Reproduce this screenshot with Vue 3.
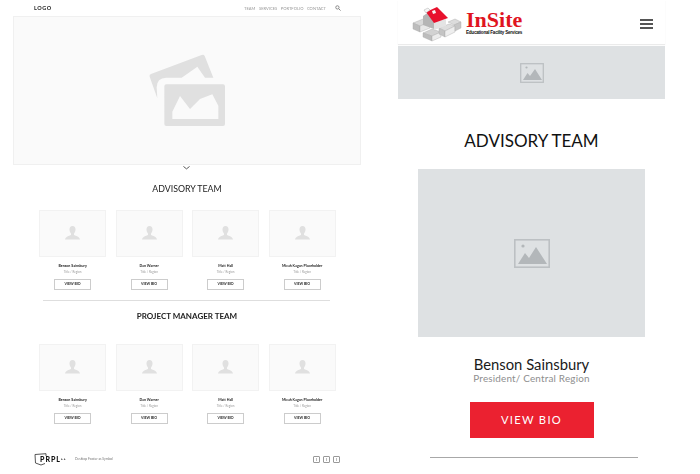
<script setup>
const advisory = ['Benson Sainsbury', 'Dan Warner', 'Matt Hall', 'Micah Kagan Placeholder']
const managers = ['Benson Sainsbury', 'Dan Warner', 'Matt Hall', 'Micah Kagan Placeholder']
const teams = [
  { title: 'ADVISORY TEAM', cls: 'advisory', people: advisory },
  { title: 'PROJECT MANAGER TEAM', cls: 'managers', people: managers },
]
const navLinks = ['TEAM', 'SERVICES', 'PORTFOLIO', 'CONTACT']
</script>

<template>
  <div class="page">
    <section class="desktop">
      <header class="desk-nav">
        <span class="logo-word">LOGO</span>
        <nav class="desk-links">
          <a v-for="l in navLinks" :key="l">{{ l }}</a>
        </nav>
        <svg class="search" viewBox="0 0 8 8" width="6" height="6">
          <circle cx="3.2" cy="3.2" r="2.2" fill="none" stroke="#777" stroke-width="1.1" />
          <path d="M5 5l2.4 2.4" stroke="#777" stroke-width="1.2" />
        </svg>
      </header>

      <div class="hero">
        <svg viewBox="0 0 228 216" width="76" height="72">
          <path fill="#e0e0e0" d="M2 68Q0 62 6 60L158 3Q164 0 167 6L193 71H168L145 38 98 71H52Q23 72 23 100L25 133Z" />
          <path fill="#e0e0e0" fill-rule="evenodd" d="M52 91H222Q228 91 228 97V210Q228 216 222 216H52Q46 216 46 210V97Q46 91 52 91ZM70 195H208V155L190 121 153 135 123 165 93 126 70 173Z" />
        </svg>
      </div>
      <svg class="chevron" viewBox="0 0 8 4" width="7" height="3.500">
        <path d="M.5 .5L4 3.300 7.500 .5" fill="none" stroke="#444" stroke-width="1" />
      </svg>

      <template v-for="team in teams" :key="team.title">
        <h2 :class="['team-title', team.cls]">{{ team.title }}</h2>
        <div :class="['cards', team.cls]">
          <article v-for="p in team.people" :key="p" class="card">
            <div class="thumb">
              <svg viewBox="0 0 15 14" width="15" height="14">
                <path fill="#e0e0e0" d="M7.500 0C5.500 0 4.500 1.500 4.500 3.500 4.500 5.500 5.500 7 6 7.500V9C4 10 .5 10.500 0 13.500H15C14.500 10.500 11 10 9 9V7.500C9.500 7 10.500 5.500 10.500 3.500 10.500 1.500 9.500 0 7.500 0Z" />
              </svg>
            </div>
            <p class="card-name">{{ p }}</p>
            <p class="card-role">Title / Region</p>
            <button class="card-btn">VIEW BIO</button>
          </article>
        </div>
        <hr v-if="team.cls === 'advisory'" class="desk-rule" />
      </template>

      <footer class="desk-foot">
        <div class="prpl">
          <svg viewBox="0 0 14 13" width="14" height="13">
            <path d="M1 1.500L12 .7V3M1 1.500L1.500 10 7 12 11 10.500" fill="none" stroke="#444" stroke-width=".9" />
          </svg>
          <span class="prpl-word">PRPL<sup>++</sup></span>
        </div>
        <span class="foot-note">Desktop Footer as Symbol</span>
        <div class="foot-icons">
          <i v-for="n in 3" :key="n" class="foot-icon"></i>
        </div>
      </footer>
    </section>

    <section class="mobile">
      <header class="mob-nav">
        <div class="insite">
          <svg class="insite-mark" viewBox="0 0 50 36" width="50" height="36">
            <path fill="#d9d9d9" stroke="#aaa" stroke-width=".4" d="M1 17L11 13 18 16 8 20Z" />
            <path fill="#bdbdbd" stroke="#aaa" stroke-width=".4" d="M1 17V23L8 26V20Z" />
            <path fill="#e8e8e8" stroke="#aaa" stroke-width=".4" d="M8 20L18 16V22L8 26Z" />
            <path fill="#d2d2d2" stroke="#aaa" stroke-width=".4" d="M11 27L20 23 29 26 20 30Z" />
            <path fill="#bdbdbd" stroke="#aaa" stroke-width=".4" d="M11 27V31L20 35V30Z" />
            <path fill="#ececec" stroke="#aaa" stroke-width=".4" d="M20 30L29 26V31L20 35Z" />
            <path fill="#dedede" stroke="#aaa" stroke-width=".4" d="M27 22L37 18 43 20 33 25Z" />
            <path fill="#c4c4c4" stroke="#aaa" stroke-width=".4" d="M27 22V28L33 31V25Z" />
            <path fill="#eee" stroke="#aaa" stroke-width=".4" d="M33 25L43 20V26L33 31Z" />
            <path fill="#dcdcdc" stroke="#aaa" stroke-width=".4" d="M36 16L43 13 49 16 42 19Z" />
            <path fill="#c6c6c6" stroke="#aaa" stroke-width=".4" d="M42 19L49 16V22L43 25V20Z" />
            <path fill="#b5b5b5" d="M11 10L17 6 22 15V23L11 19Z" />
            <path fill="#e4e4e4" d="M22 16L34 13V20L22 24Z" />
            <path fill="#e8112d" d="M14 6L25 1 36 12 22 17Z" />
            <path fill="#f6f6f6" stroke="#999" stroke-width=".4" d="M12 4L16 2 18 4 14 7Z" />
            <path fill="#f6f6f6" d="M20 5L23 4 24 7 21 8Z" />
          </svg>
          <div class="insite-text">
            <span class="insite-name">InSite</span>
            <span class="insite-tag">Educational Facility Services</span>
          </div>
        </div>
        <div class="burger"><span></span><span></span><span></span></div>
      </header>

      <div class="mob-banner">
        <svg viewBox="0 0 24 20" width="24" height="20">
          <rect x=".7" y=".7" width="22.600" height="18.600" fill="none" stroke="#bcc0c3" stroke-width="1.300" />
          <circle cx="6.500" cy="4.500" r="1.100" fill="#b3b7ba" />
          <path fill="#b3b7ba" d="M3 17L7.500 10 10 13 15 6 22 17Z" />
        </svg>
      </div>

      <h1 class="mob-title">ADVISORY TEAM</h1>

      <div class="mob-photo">
        <svg viewBox="0 0 36 29" width="36" height="29">
          <rect x=".8" y=".8" width="34.400" height="27.400" fill="none" stroke="#bcc0c3" stroke-width="1.600" />
          <circle cx="9" cy="7" r="1.600" fill="#b3b7ba" />
          <path fill="#b3b7ba" d="M4 25L11 14 15 19 22 8 33 25Z" />
        </svg>
      </div>

      <p class="mob-name">Benson Sainsbury</p>
      <p class="mob-role">President/ Central Region</p>
      <button class="mob-btn">VIEW BIO</button>
      <hr class="mob-rule" />
    </section>
  </div>
</template>

<style scoped>
.page {
  display: flex;
  width: 700px;
  height: 474px;
  overflow: hidden;
  background: #fff;
  font-family: Lato, "Noto Sans", sans-serif;
}

/* left: desktop wireframe */
.desktop {
  width: 348px;
  margin-left: 13px;
  flex: none;
  display: flex;
  flex-direction: column;
  filter: blur(0.25px);
}
.desk-nav {
  height: 16px;
  display: flex;
  align-items: center;
  padding: 0 20px 0 21px;
}
.logo-word {
  font-size: 5.500px;
  letter-spacing: 0.5px;
  color: #222;
  font-weight: 700;
}
.desk-links {
  margin-left: auto;
  display: flex;
  gap: 3.500px;
  font-size: 4.100px;
  color: #999;
}
.search {
  margin-left: 9px;
}
.hero {
  height: 149px;
  box-sizing: border-box;
  border: 1px solid #f0f0f0;
  background: #fafafa;
  display: flex;
  align-items: center;
  justify-content: center;
  padding-bottom: 1px;
}
.chevron {
  display: block;
  margin: 0 auto;
  position: relative;
  left: -0.5px;
  top: 1px;
}
.team-title {
  margin: 13px 0 0;
  height: 14px;
  line-height: 14px;
  font-size: 8.800px;
  font-weight: 400;
  color: #222;
  text-align: center;
}
.team-title.managers {
  margin-top: 8.500px;
  font-weight: 700;
  font-size: 8px;
}
.cards {
  display: grid;
  grid-template-columns: repeat(4, 67.250px);
  column-gap: 9.250px;
  padding-left: 26px;
  margin-top: 14px;
}
.cards.managers {
  margin-top: 20.500px;
}
.card {
  display: flex;
  flex-direction: column;
  align-items: center;
}
.thumb {
  width: 100%;
  height: 47px;
  box-sizing: border-box;
  border: 1px solid #f2f2f2;
  background: #fafafa;
  display: flex;
  align-items: center;
  justify-content: center;
}
.card-name {
  margin: 6.500px 0 0;
  font-size: 3.600px;
  line-height: 5px;
  font-weight: 700;
  color: #222;
}
.card-role {
  margin: 1.500px 0 0;
  font-size: 3px;
  line-height: 4px;
  color: #999;
}
.card-btn {
  margin-top: 5px;
  width: 37px;
  height: 11px;
  padding: 0;
  box-sizing: border-box;
  background: #fff;
  border: 1px solid #ccc;
  font-family: inherit;
  font-size: 3.500px;
  font-weight: 700;
  color: #222;
}
.desk-rule {
  width: 287px;
  margin: 10px 0 0 30px;
  border: 0;
  border-top: 1px solid #dedede;
}
.desk-foot {
  display: flex;
  align-items: center;
  margin-top: 27.500px;
  padding: 0 21px 0 21px;
  height: 16px;
}
.prpl {
  display: flex;
  align-items: center;
  width: 41px;
}
.prpl-word {
  margin-left: -8px;
  font-size: 7px;
  font-weight: 900;
  letter-spacing: 1px;
  color: #111;
}
.prpl-word sup {
  font-size: 3px;
  vertical-align: 2px;
  line-height: 0;
}
.foot-note {
  font-size: 3.300px;
  color: #777;
}
.foot-icons {
  margin-left: auto;
  display: flex;
  gap: 3px;
}
.foot-icon {
  position: relative;
  display: block;
  width: 7px;
  height: 7px;
  box-sizing: border-box;
  border: 1px solid #999;
  border-radius: 1px;
}
.foot-icon::after {
  content: "";
  position: absolute;
  left: 1.500px;
  top: 1px;
  width: 1.500px;
  height: 3px;
  background: #bbb;
}

/* right: mobile comp */
.mobile {
  width: 267px;
  margin-left: 37px;
  flex: none;
  display: flex;
  flex-direction: column;
  align-items: center;
}
.mob-nav {
  width: 100%;
  height: 44px;
  box-sizing: border-box;
  display: flex;
  align-items: center;
  justify-content: space-between;
  padding: 0 12px 0 14px;
  box-shadow: 0 1px 1px rgba(0, 0, 0, 0.08);
}
.insite {
  display: flex;
  align-items: center;
  gap: 4px;
}
.insite-mark {
  margin-top: 4px;
}
.insite-text {
  margin-top: 2px;
}
.insite-name {
  display: block;
  font-family: "Liberation Serif", serif;
  font-size: 22px;
  line-height: 20px;
  font-weight: 700;
  color: #e0141f;
}
.insite-tag {
  display: block;
  font-family: "Liberation Sans", sans-serif;
  font-size: 4.600px;
  line-height: 6px;
  font-weight: 700;
  letter-spacing: -0.25px;
  color: #111;
  white-space: nowrap;
}
.burger {
  display: flex;
  flex-direction: column;
  gap: 2px;
  width: 13px;
  margin-top: 3px;
}
.burger span {
  height: 2px;
  background: #555;
}
.mob-banner {
  margin-top: 2px;
  width: 100%;
  height: 53px;
  flex: none;
  background: #dee1e3;
  display: flex;
  align-items: center;
  justify-content: center;
}
.mob-title {
  margin: 28.500px 0 0;
  height: 26px;
  line-height: 26px;
  font-size: 17px;
  font-weight: 400;
  color: #111;
}
.mob-photo {
  margin-top: 15.500px;
  width: 227px;
  height: 168px;
  flex: none;
  background: #dee1e3;
  display: flex;
  align-items: center;
  justify-content: center;
}
.mob-name {
  margin: 18px 0 0;
  font-size: 14.800px;
  line-height: 18px;
  color: #1a1a1a;
}
.mob-role {
  margin: 0;
  font-size: 9.900px;
  line-height: 11px;
  letter-spacing: 0.2px;
  color: #8e8e8e;
}
.mob-btn {
  margin-top: 18px;
  width: 124px;
  height: 36px;
  flex: none;
  border: 0;
  padding: 0 0 2px;
  background: #eb2130;
  color: #fff;
  font-family: inherit;
  font-size: 11.200px;
  letter-spacing: 1.300px;
}
.mob-rule {
  width: 208px;
  margin: 19px 0 0 5px;
  border: 0;
  border-top: 1px solid #a8a8a8;
}
</style>
